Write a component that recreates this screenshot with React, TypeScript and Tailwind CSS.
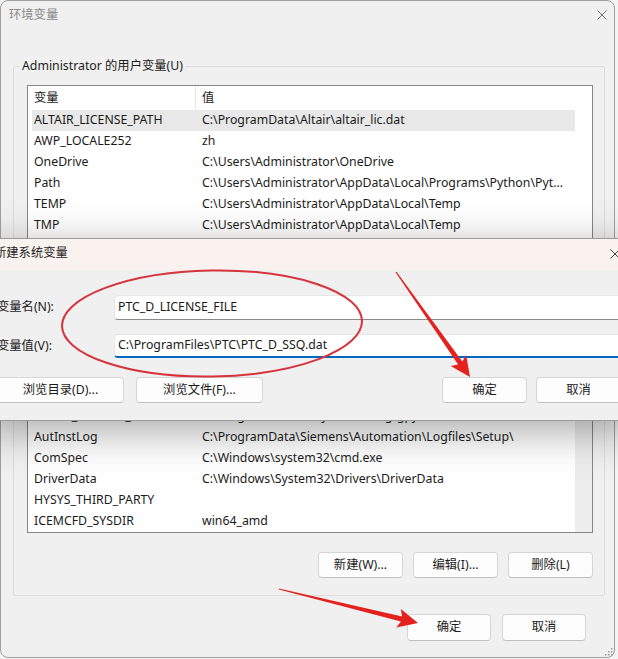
import React from "react";

const userVars: [string, string][] = [
  ["ALTAIR_LICENSE_PATH", "C:\\ProgramData\\Altair\\altair_lic.dat"],
  ["AWP_LOCALE252", "zh"],
  ["OneDrive", "C:\\Users\\Administrator\\OneDrive"],
  ["Path", "C:\\Users\\Administrator\\AppData\\Local\\Programs\\Python\\Pyt..."],
  ["TEMP", "C:\\Users\\Administrator\\AppData\\Local\\Temp"],
  ["TMP", "C:\\Users\\Administrator\\AppData\\Local\\Temp"],
];

const sysVars: [string, string][] = [
  ["ANSYS_LICENSE_FILE", "C:\\ProgramData\\Ansys\\Licensing\\gpy.lic"],
  ["AutInstLog", "C:\\ProgramData\\Siemens\\Automation\\Logfiles\\Setup\\"],
  ["ComSpec", "C:\\Windows\\system32\\cmd.exe"],
  ["DriverData", "C:\\Windows\\System32\\Drivers\\DriverData"],
  ["HYSYS_THIRD_PARTY", ""],
  ["ICEMCFD_SYSDIR", "win64_amd"],
];

// tapered annotation arrow, thin at the start and a wide head at the tip
function arrowPoints(sx: number, sy: number, tx: number, ty: number) {
  const headLen = 20;
  const headW = 9.5;
  const w0 = 0.6;
  const w1 = 2.6;
  const dx = tx - sx;
  const dy = ty - sy;
  const len = Math.hypot(dx, dy);
  const ux = dx / len;
  const uy = dy / len;
  const nx = -uy;
  const ny = ux;
  const bx = tx - ux * headLen;
  const by = ty - uy * headLen;
  const pts = [
    [sx + nx * w0, sy + ny * w0],
    [bx + nx * w1 + ux * 3, by + ny * w1 + uy * 3],
    [bx + nx * headW, by + ny * headW],
    [tx, ty],
    [bx - nx * headW, by - ny * headW],
    [bx - nx * w1 + ux * 3, by - ny * w1 + uy * 3],
    [sx - nx * w0, sy - ny * w0],
  ];
  return pts.map((p) => p.map((v) => v.toFixed(1)).join(",")).join(" ");
}

function Btn({ label, className }: { label: string; className: string }) {
  return (
    <div
      className={
        "flex items-center justify-center bg-[#fdfdfd] border border-[#d6d6d6] border-b-[#c0c0c0] rounded-[4px] text-[#1b1b1b] " +
        className
      }
    >
      {label}
    </div>
  );
}

function CloseIcon({ color }: { color: string }) {
  return (
    <svg width="10" height="10" viewBox="0 0 10 10">
      <path d="M0.5 0.5 L9.5 9.5 M9.5 0.5 L0.5 9.5" stroke={color} strokeWidth="1" />
    </svg>
  );
}

function VarList({
  rows,
  selected,
  scrollbar,
  height,
}: {
  rows: [string, string][];
  selected: number;
  scrollbar: boolean;
  height: string;
}) {
  return (
    <div className={"flex bg-white border border-[#868686] " + height}>
      <div className="flex-1 pl-[4px] overflow-hidden text-[#1b1b1b]">
        <div className="flex h-[24px] items-center">
          <div className="w-[164px] h-full flex items-center pl-[2px] border-r border-[#e6e6e6]">变量</div>
          <div className="pl-[6px]">值</div>
        </div>
        {rows.map(([k, v], i) => (
          <div
            key={k}
            className={
              "flex h-[21px] items-center whitespace-nowrap " + (i === selected ? "bg-[#e8e8e8]" : "")
            }
          >
            <div className="w-[164px] pl-[2px]">{k}</div>
            <div className="pl-[6px]">{v}</div>
          </div>
        ))}
      </div>
      <div className={"w-[17px] " + (scrollbar ? "bg-[#ededed]" : "")} />
    </div>
  );
}

export default function App() {
  return (
    <div className="relative w-[618px] h-[659px] overflow-hidden bg-[#f4f4f4] text-[12.3px] font-['Noto_Sans','Noto_Sans_CJK_SC',sans-serif]">
      {/* main window: 环境变量 */}
      <div className="w-[615px] h-[658px] bg-[#f0f0f0] border border-[#a0a0a0] rounded-[8px] flex flex-col">
        <div className="h-[28px] flex items-center justify-between pl-[8px] pr-[7px]">
          <span className="text-[#8a8a8a]">环境变量</span>
          <CloseIcon color="#707070" />
        </div>

        <fieldset className="mt-[29px] ml-[12px] mr-[9px] border border-[#dcdcdc] rounded-[2px]">
          <legend className="ml-[6px] px-[2px] leading-[16px] text-[#1b1b1b]">Administrator 的用户变量(U)</legend>
          <div className="pt-[11px] pl-[13px] pr-[11px] pb-[17px]">
            <VarList rows={userVars} selected={0} scrollbar={false} height="h-[194px]" />
            <div className="mt-[19px] flex justify-end gap-[10px]">
              <Btn label="新建(N)..." className="w-[85px] h-[26px]" />
              <Btn label="编辑(E)..." className="w-[85px] h-[26px]" />
              <Btn label="删除(D)" className="w-[85px] h-[26px]" />
            </div>
          </div>
        </fieldset>

        <fieldset className="mt-[12px] ml-[12px] mr-[9px] border border-[#dcdcdc] rounded-[2px]">
          <legend className="ml-[6px] px-[2px] leading-[16px] text-[#1b1b1b]">系统变量(S)</legend>
          <div className="pt-[11px] pl-[13px] pr-[11px] pb-[17px]">
            <VarList rows={sysVars} selected={-1} scrollbar={true} height="h-[152px]" />
            <div className="mt-[19px] flex justify-end gap-[10px]">
              <Btn label="新建(W)..." className="w-[85px] h-[26px]" />
              <Btn label="编辑(I)..." className="w-[85px] h-[26px]" />
              <Btn label="删除(L)" className="w-[85px] h-[26px]" />
            </div>
          </div>
        </fieldset>

        <div className="mt-[18px] flex justify-end gap-[11px] pr-[28px]">
          <Btn label="确定" className="w-[84px] h-[27px]" />
          <Btn label="取消" className="w-[84px] h-[27px]" />
        </div>
      </div>

      {/* resize grip */}
      <svg className="absolute left-[604px] top-[647px]" width="9" height="9" viewBox="0 0 9 9">
        {[
          [7, 1],
          [4, 4],
          [7, 4],
          [1, 7],
          [4, 7],
          [7, 7],
        ].map(([x, y]) => (
          <rect key={x + "-" + y} x={x} y={y} width="1.5" height="1.5" fill="#9a9a9a" />
        ))}
      </svg>

      {/* dialog: 新建系统变量 */}
      <div className="absolute left-[-16px] top-[238px] w-[650px] h-[183px] bg-[#f0f0f0] border border-[#9a9a9a] shadow-[0_10px_40px_rgba(0,0,0,0.35)] flex flex-col text-[#1b1b1b]">
        <div className="h-[31px] bg-[#f9f2ef] flex items-center justify-between pl-[9px] pr-[13px] pb-[2px]">
          <span>新建系统变量</span>
          <CloseIcon color="#444444" />
        </div>
        <div className="flex flex-col pl-[12px] pr-[12px] pt-[25px]">
          <div className="flex items-center h-[25px]">
            <div className="w-[117px]">变量名(N):</div>
            <div className="flex-1 h-full flex items-center pl-[3px] bg-white border border-[#e6e6e6] border-b-[#8a8a8a] rounded-[4px]">
              PTC_D_LICENSE_FILE
            </div>
          </div>
          <div className="flex items-center h-[24px] mt-[14px]">
            <div className="w-[117px]">变量值(V):</div>
            <div className="flex-1 h-full flex items-center pl-[3px] bg-white border border-[#e6e6e6] border-b-2 border-b-[#0067c0] rounded-[4px]">
              C:\ProgramFiles\PTC\PTC_D_SSQ.dat
            </div>
          </div>
          <div className="flex justify-between mt-[19px]">
            <div className="flex gap-[12px]">
              <Btn label="浏览目录(D)..." className="w-[127px] h-[26px]" />
              <Btn label="浏览文件(F)..." className="w-[127px] h-[26px]" />
            </div>
            <div className="flex gap-[9px]">
              <Btn label="确定" className="w-[85px] h-[26px]" />
              <Btn label="取消" className="w-[85px] h-[26px]" />
            </div>
          </div>
        </div>
      </div>

      {/* red annotations */}
      <svg className="absolute left-0 top-0 pointer-events-none" width="618" height="659" viewBox="0 0 618 659">
        <ellipse
          cx="212"
          cy="323.5"
          rx="150"
          ry="53"
          transform="rotate(-1 212 323.5)"
          fill="none"
          stroke="#d6333b"
          strokeWidth="2"
        />
        <polygon points={arrowPoints(396, 272, 470, 377)} fill="#e3221f" />
        <polygon points={arrowPoints(279, 589, 418, 623)} fill="#e3221f" />
      </svg>
    </div>
  );
}
